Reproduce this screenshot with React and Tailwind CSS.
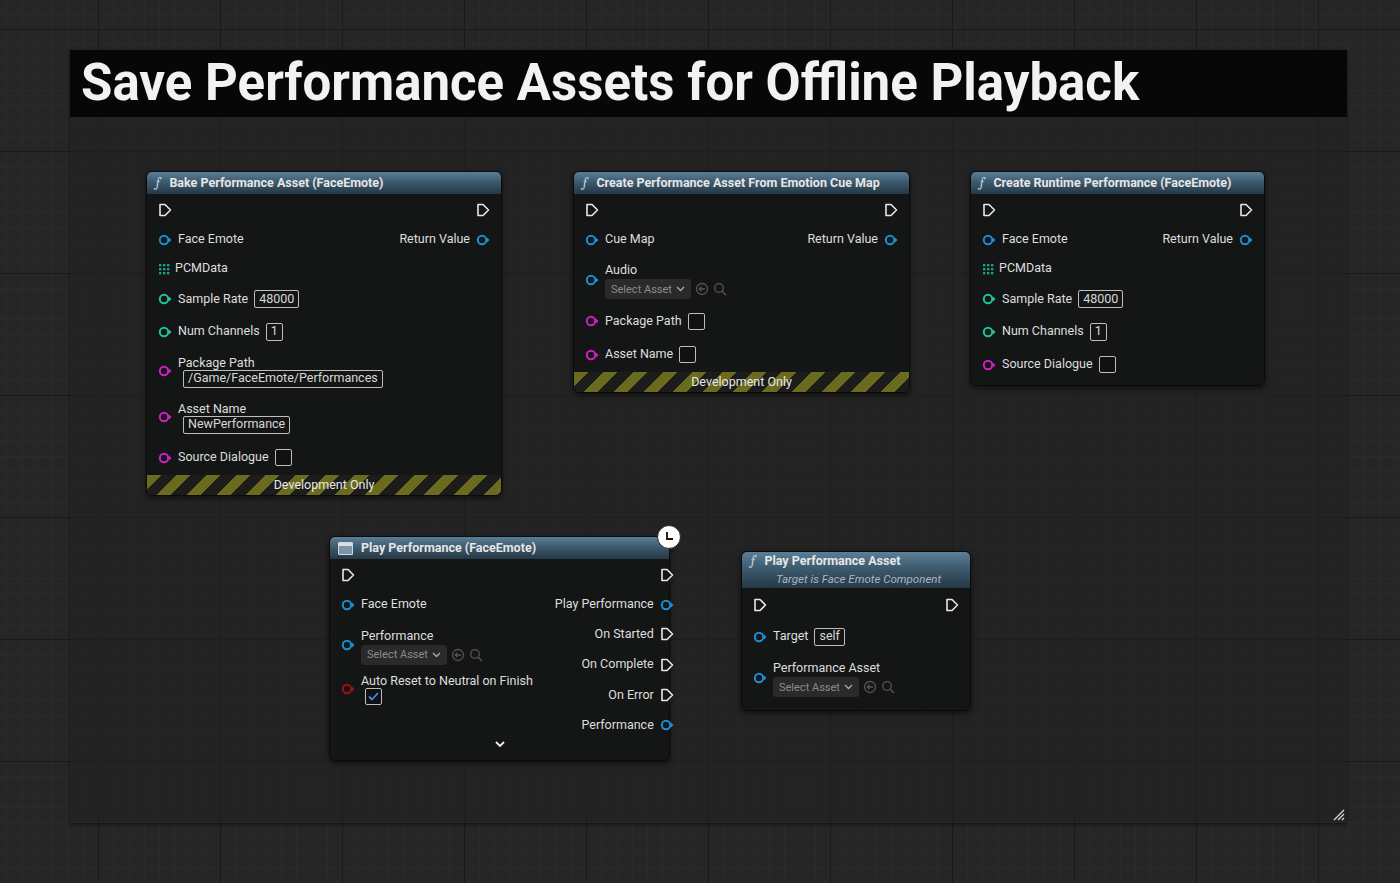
import React from "react";

const BLUE = "#1a8fd6";
const TEAL = "#1ec39a";
const PINK = "#d21ec8";
const RED = "#a01010";

function Pin({ color }) {
  return (
    <svg width="14" height="12" viewBox="0 0 14 12" className="shrink-0">
      <circle cx="6" cy="6" r="4.2" fill="none" stroke={color} strokeWidth="2" />
      <path d="M11 3.5 L13.5 6 L11 8.5 Z" fill={color} />
    </svg>
  );
}

function Exec() {
  return (
    <svg width="14" height="14" viewBox="0 0 14 14" className="shrink-0">
      <path d="M2 1.5 H7 L12.5 7 L7 12.5 H2 Z" fill="none" stroke="#e8e8e8" strokeWidth="1.6" strokeLinejoin="round" />
    </svg>
  );
}

function Grid4() {
  return (
    <svg width="12" height="12" viewBox="0 0 12 12" className="shrink-0">
      {[1, 5, 9].map((x) => [1, 5, 9].map((y) => <rect key={x + "-" + y} x={x} y={y} width="2.4" height="2.4" fill="#17a08a" />))}
    </svg>
  );
}

function Box({ children }) {
  return (
    <span className="inline-flex items-center h-[18px] px-1 border border-[#bdbdbd] rounded-[2px] text-[#d8d8d8] text-[12.5px] leading-none">{children}</span>
  );
}

function Check({ on }) {
  return (
    <span className="inline-flex items-center justify-center w-[17px] h-[17px] border border-[#bdbdbd] rounded-[2px] bg-[#111]">
      {on && (
        <svg width="11" height="9" viewBox="0 0 11 9"><path d="M1 4.5 L4 7.5 L10 1" fill="none" stroke="#3d8ee8" strokeWidth="1.8" /></svg>
      )}
    </span>
  );
}

function AssetPicker() {
  return (
    <div className="flex items-center gap-1 mt-[2px]">
      <span className="flex items-center gap-1 h-[20px] px-[6px] rounded-[3px] bg-[#2a2a2a] text-[#8a8a8a] text-[11px]">
        Select Asset
        <svg width="9" height="6" viewBox="0 0 9 6"><path d="M1 1 L4.5 4.5 L8 1" fill="none" stroke="#aaa" strokeWidth="1.3" /></svg>
      </span>
      <svg width="14" height="14" viewBox="0 0 14 14"><circle cx="7" cy="7" r="5.5" fill="none" stroke="#555" strokeWidth="1.3" /><path d="M10 7 H4.5 M6.5 4.8 L4.3 7 L6.5 9.2" fill="none" stroke="#555" strokeWidth="1.3" /></svg>
      <svg width="14" height="14" viewBox="0 0 14 14"><circle cx="6" cy="6" r="4.3" fill="none" stroke="#555" strokeWidth="1.3" /><path d="M9.2 9.2 L13 13" stroke="#555" strokeWidth="1.5" /></svg>
    </div>
  );
}

function Row({ h = 30, children, className = "" }) {
  return (
    <div className={`flex items-center gap-[6px] px-[11px] whitespace-nowrap ${className}`} style={{ height: h }}>
      {children}
    </div>
  );
}

function Title({ icon = "f", children, sub }) {
  return (
    <div className="flex flex-col justify-center px-[8px] rounded-t-[5px] bg-[linear-gradient(180deg,#5b7f98_0%,#3d5a6e_45%,#253845_100%)] text-[#e6e6e6] text-[12.5px] font-bold" style={{ height: sub ? 36 : 22 }}>
      <div className="flex items-center gap-[8px] whitespace-nowrap">
        {icon === "f" ? (
          <span className="italic font-serif text-[#b8d4ea] text-[14px] leading-none font-normal">ƒ</span>
        ) : (
          <span className="w-[15px] h-[13px] border border-[#cfd8df] bg-[#7f93a3] rounded-[1px] relative">
            <span className="absolute left-0 right-0 top-0 h-[3px] bg-[#d8e0e6]" />
          </span>
        )}
        <span>{children}</span>
      </div>
      {sub && <div className="pl-[26px] italic font-normal text-[11.5px] text-[#a9b6c0]">{sub}</div>}
    </div>
  );
}

function Stripes() {
  return (
    <div className="h-[20px] flex items-center justify-center text-[12.5px] text-[#e8e8e8] rounded-b-[5px] bg-[repeating-linear-gradient(135deg,#6a6b1e_0px,#6a6b1e_10px,#1c1d1a_10px,#1c1d1a_21px)]">
      Development Only
    </div>
  );
}

function Node({ x, y, w, children }) {
  return (
    <div className="absolute rounded-[6px] bg-[#141616]/95 border border-[#0b0b0b] shadow-[0_2px_6px_rgba(0,0,0,0.6)] text-[#dedede] text-[12.5px]" style={{ left: x, top: y, width: w }}>
      {children}
    </div>
  );
}

export default function App() {
  return (
    <div
      className="relative w-[1400px] h-[883px] overflow-hidden bg-[#262626] bg-[linear-gradient(90deg,#1a1a1a_1px,transparent_1px),linear-gradient(0deg,#1a1a1a_1px,transparent_1px),linear-gradient(90deg,#2b2b2b_1px,transparent_1px),linear-gradient(0deg,#2b2b2b_1px,transparent_1px)] bg-[size:122px_122px,122px_122px,15.25px_15.25px,15.25px_15.25px] bg-[position:98px_30px,98px_30px,98px_30px,98px_30px]"
      style={{ fontFamily: "Roboto, 'Noto Sans', sans-serif" }}
    >
      {/* comment box */}
      <div className="absolute left-[70px] top-[50px] w-[1277px] h-[773px] bg-[#222222]/60 shadow-[0_1px_3px_rgba(0,0,0,0.6)]">
        <div className="h-[67px] bg-[#070707] flex items-center pl-[11px] text-[51px] font-bold text-[#f2f2f2]">
          Save Performance Assets for Offline Playback
        </div>
        <svg className="absolute right-[2px] bottom-[2px]" width="12" height="12" viewBox="0 0 12 12">
          <path d="M1 11 L11 1 M5 11 L11 5 M9 11 L11 9" stroke="#ddd" strokeWidth="1.2" />
        </svg>
      </div>

      {/* Bake */}
      <Node x={146} y={171} w={356}>
        <Title>Bake Performance Asset (FaceEmote)</Title>
        <div className="pt-[1px]">
          <Row h={30} className="justify-between"><Exec /><Exec /></Row>
          <Row h={29} className="justify-between">
            <span className="flex items-center gap-[6px]"><Pin color={BLUE} />Face Emote</span>
            <span className="flex items-center gap-[6px]">Return Value<Pin color={BLUE} /></span>
          </Row>
          <Row h={29}><Grid4 /><span className="-ml-[1px]">PCMData</span></Row>
          <Row h={32}><Pin color={TEAL} />Sample Rate <Box>48000</Box></Row>
          <Row h={33}><Pin color={TEAL} />Num Channels <Box>1</Box></Row>
          <Row h={46}>
            <Pin color={PINK} />
            <div className="flex flex-col leading-[15px]">
              <span>Package Path</span>
              <span className="ml-[5px]"><Box>/Game/FaceEmote/Performances</Box></span>
            </div>
          </Row>
          <Row h={46}>
            <Pin color={PINK} />
            <div className="flex flex-col leading-[15px]">
              <span>Asset Name</span>
              <span className="ml-[5px]"><Box>NewPerformance</Box></span>
            </div>
          </Row>
          <Row h={35}><Pin color={PINK} />Source Dialogue <Check /></Row>
        </div>
        <Stripes />
      </Node>

      {/* Create from cue map */}
      <Node x={573} y={171} w={337}>
        <Title>Create Performance Asset From Emotion Cue Map</Title>
        <div className="pt-[1px]">
          <Row h={30} className="justify-between"><Exec /><Exec /></Row>
          <Row h={29} className="justify-between">
            <span className="flex items-center gap-[6px]"><Pin color={BLUE} />Cue Map</span>
            <span className="flex items-center gap-[6px]">Return Value<Pin color={BLUE} /></span>
          </Row>
          <Row h={51}>
            <Pin color={BLUE} />
            <div className="flex flex-col leading-[15px] pt-[2px]">
              <span>Audio</span>
              <AssetPicker />
            </div>
          </Row>
          <Row h={32}><Pin color={PINK} />Package Path <Check /></Row>
          <Row h={35}><Pin color={PINK} />Asset Name <Check /></Row>
        </div>
        <Stripes />
      </Node>

      {/* Create runtime */}
      <Node x={970} y={171} w={295}>
        <Title>Create Runtime Performance (FaceEmote)</Title>
        <div className="pt-[1px] pb-[4px]">
          <Row h={30} className="justify-between"><Exec /><Exec /></Row>
          <Row h={29} className="justify-between">
            <span className="flex items-center gap-[6px]"><Pin color={BLUE} />Face Emote</span>
            <span className="flex items-center gap-[6px]">Return Value<Pin color={BLUE} /></span>
          </Row>
          <Row h={29}><Grid4 /><span className="-ml-[1px]">PCMData</span></Row>
          <Row h={32}><Pin color={TEAL} />Sample Rate <Box>48000</Box></Row>
          <Row h={33}><Pin color={TEAL} />Num Channels <Box>1</Box></Row>
          <Row h={33}><Pin color={PINK} />Source Dialogue <Check /></Row>
        </div>
      </Node>

      {/* Play Performance */}
      <Node x={329} y={536} w={341}>
        <Title icon="box">Play Performance (FaceEmote)</Title>
        <div className="flex justify-between pt-[1px]">
          <div className="flex flex-col">
            <Row h={30}><Exec /></Row>
            <Row h={29}><Pin color={BLUE} />Face Emote</Row>
            <Row h={52}>
              <Pin color={BLUE} />
              <div className="flex flex-col leading-[15px] pt-[2px]">
                <span>Performance</span>
                <AssetPicker />
              </div>
            </Row>
            <Row h={36}>
              <Pin color={RED} />
              <div className="flex flex-col leading-[15px]">
                <span>Auto Reset to Neutral on Finish</span>
                <span className="ml-[4px]"><Check on /></span>
              </div>
            </Row>
          </div>
          <div className="flex flex-col items-end">
            <Row h={30}><Exec /></Row>
            <Row h={29}>Play Performance<Pin color={BLUE} /></Row>
            <Row h={30}>On Started<Exec /></Row>
            <Row h={31}>On Complete<Exec /></Row>
            <Row h={30}>On Error<Exec /></Row>
            <Row h={30}>Performance<Pin color={BLUE} /></Row>
          </div>
        </div>
        <div className="flex justify-center h-[20px]">
          <svg width="12" height="8" viewBox="0 0 12 8"><path d="M2 2 L6 6 L10 2" fill="none" stroke="#eee" strokeWidth="1.8" /></svg>
        </div>
        <div className="absolute -right-[12px] -top-[12px] w-[24px] h-[24px] rounded-full bg-white border border-[#222] flex items-center justify-center">
          <svg width="14" height="14" viewBox="0 0 14 14"><path d="M5 2 V9 H11" fill="none" stroke="#111" strokeWidth="1.8" /></svg>
        </div>
      </Node>

      {/* Play Performance Asset */}
      <Node x={741} y={551} w={230}>
        <Title sub="Target is Face Emote Component">Play Performance Asset</Title>
        <div className="pt-[2px] pb-[8px]">
          <Row h={30} className="justify-between"><Exec /><Exec /></Row>
          <Row h={33}><Pin color={BLUE} />Target <Box>self</Box></Row>
          <Row h={49}>
            <Pin color={BLUE} />
            <div className="flex flex-col leading-[15px] pt-[2px]">
              <span>Performance Asset</span>
              <AssetPicker />
            </div>
          </Row>
        </div>
      </Node>
    </div>
  );
}
